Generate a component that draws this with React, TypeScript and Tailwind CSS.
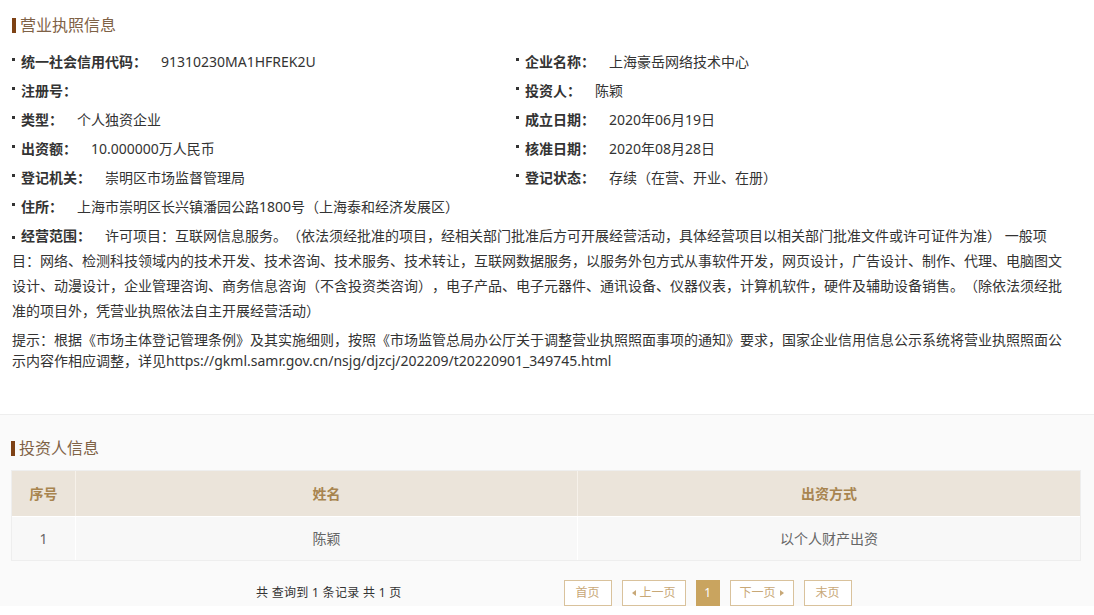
import React from "react";

const LEFT: [string, string][] = [
  ["统一社会信用代码：", "91310230MA1HFREK2U"],
  ["注册号：", ""],
  ["类型：", "个人独资企业"],
  ["出资额：", "10.000000万人民币"],
  ["登记机关：", "崇明区市场监督管理局"],
];

const RIGHT: [string, string][] = [
  ["企业名称：", "上海豪岳网络技术中心"],
  ["投资人：", "陈颖"],
  ["成立日期：", "2020年06月19日"],
  ["核准日期：", "2020年08月28日"],
  ["登记状态：", "存续（在营、开业、在册）"],
];

const SCOPE =
  "许可项目：互联网信息服务。（依法须经批准的项目，经相关部门批准后方可开展经营活动，具体经营项目以相关部门批准文件或许可证件为准） 一般项目：网络、检测科技领域内的技术开发、技术咨询、技术服务、技术转让，互联网数据服务，以服务外包方式从事软件开发，网页设计，广告设计、制作、代理、电脑图文设计、动漫设计，企业管理咨询、商务信息咨询（不含投资类咨询），电子产品、电子元器件、通讯设备、仪器仪表，计算机软件，硬件及辅助设备销售。（除依法须经批准的项目外，凭营业执照依法自主开展经营活动）";

const HINT =
  "提示：根据《市场主体登记管理条例》及其实施细则，按照《市场监管总局办公厅关于调整营业执照照面事项的通知》要求，国家企业信用信息公示系统将营业执照照面公示内容作相应调整，详见https://gkml.samr.gov.cn/nsjg/djzcj/202209/t20220901_349745.html";

function Dot() {
  return <span className="inline-block w-[3px] h-[3px] bg-[#333] mr-[6px] -translate-y-[2px]" />;
}

function Field({ label, value }: { label: string; value: string }) {
  return (
    <div className="flex items-center h-[29px] whitespace-nowrap">
      <Dot />
      <span className="font-bold text-[#333]">{label}</span>
      <span className="ml-[14px] text-[#333]">{value}</span>
    </div>
  );
}

function SectionTitle({ text }: { text: string }) {
  return (
    <div className="flex items-center h-[22px]">
      <span className="inline-block w-[4px] h-[15px] bg-[#7e4215] mr-[4px]" />
      <span className="text-[16px] text-[#7f6246]">{text}</span>
    </div>
  );
}

function PageBtn({ children, active, narrow }: { children: React.ReactNode; active?: boolean; narrow?: boolean }) {
  if (active) {
    return (
      <span className="h-[26px] w-[24px] flex items-center justify-center bg-[#c9a45f] border border-[#c9a45f] text-white text-[12px]">
        {children}
      </span>
    );
  }
  return (
    <span
      className={
        narrow
          ? "h-[26px] px-[9px] flex items-center border border-[#d9c29c] text-[#c8a877] text-[12px] bg-white"
          : "h-[26px] px-[11px] flex items-center border border-[#d9c29c] text-[#c8a877] text-[12px] bg-white"
      }
    >
      {children}
    </span>
  );
}

export default function App() {
  return (
    <div
      className="w-[1094px] h-[615px] overflow-hidden bg-white text-[14px] text-[#333] [text-spacing-trim:space-all]"
      style={{ fontFamily: '"Noto Sans", "Noto Sans CJK SC", sans-serif' }}
    >
      {/* 营业执照信息 */}
      <div className="px-[12px] pt-[14px] pb-[43px]">
        <SectionTitle text="营业执照信息" />
        <div className="mt-[11px] grid grid-cols-[504px_1fr]">
          <div>
            {LEFT.map(([l, v]) => (
              <Field key={l} label={l} value={v} />
            ))}
          </div>
          <div>
            {RIGHT.map(([l, v]) => (
              <Field key={l} label={l} value={v} />
            ))}
          </div>
        </div>
        <Field label="住所：" value="上海市崇明区长兴镇潘园公路1800号（上海泰和经济发展区）" />
        <p className="mt-[2px] leading-[25px] w-[1058px]">
          <Dot />
          <span className="font-bold">经营范围：</span>
          <span className="inline-block w-[14px]" />
          {SCOPE}
        </p>
        <p className="mt-[6px] leading-[21px] w-[1058px]">{HINT}</p>
      </div>

      {/* 投资人信息 */}
      <div className="border-t border-[#eeeeee] bg-[#fafafa] px-[11px] pt-[22px]">
        <SectionTitle text="投资人信息" />
        <div className="mt-[11px] w-[1070px] border border-[#eeeeee]">
          <div className="grid grid-cols-[64px_502px_1fr] h-[45px] bg-[#ebe4da] text-[#a8844f] font-bold text-[14px]">
            <div className="flex items-center justify-center border-r border-[#f6f1ea]">序号</div>
            <div className="flex items-center justify-center border-r border-[#f6f1ea]">姓名</div>
            <div className="flex items-center justify-center">出资方式</div>
          </div>
          <div className="grid grid-cols-[64px_502px_1fr] h-[44px] bg-[#f8f8f8] text-[#666] border-t border-white">
            <div className="flex items-center justify-center border-r border-white">1</div>
            <div className="flex items-center justify-center border-r border-white">陈颖</div>
            <div className="flex items-center justify-center">以个人财产出资</div>
          </div>
        </div>
        <div className="flex items-center mt-[19px]">
          <span className="ml-[245px] text-[12px] text-[#333] tracking-[0.3px]">共 查询到 1 条记录 共 1 页</span>
          <div className="ml-[162px] flex items-center gap-[10px]">
            <PageBtn>首页</PageBtn>
            <PageBtn narrow>
              <span className="inline-block w-0 h-0 border-y-[3px] border-y-transparent border-r-[4px] border-r-[#c8a877] mr-[4px]" />
              上一页
            </PageBtn>
            <PageBtn active>1</PageBtn>
            <PageBtn narrow>
              下一页
              <span className="inline-block w-0 h-0 border-y-[3px] border-y-transparent border-l-[4px] border-l-[#c8a877] ml-[4px]" />
            </PageBtn>
            <PageBtn>末页</PageBtn>
          </div>
        </div>
      </div>
    </div>
  );
}
